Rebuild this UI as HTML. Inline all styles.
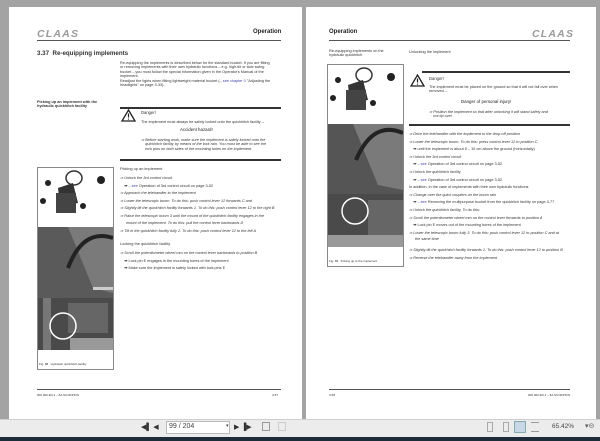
<!DOCTYPE html><html><head><style>
*{margin:0;padding:0;box-sizing:border-box}
body{width:600px;height:441px;background:#a3a3a3;position:relative;overflow:hidden;font-family:"Liberation Sans",sans-serif;color:#222}
.p{position:absolute;background:#fff}
.a{position:absolute;white-space:nowrap}
.t{position:absolute;font-size:3.8px;line-height:4.4px;color:#333;white-space:nowrap}
.i{font-style:italic}
.ln{position:absolute;height:1px;background:#555}
.lk{position:absolute;height:1.6px;background:#333}
.logo{position:absolute;font-style:italic;font-weight:bold;color:#9a9a9a;font-size:10.5px;letter-spacing:1.2px}
.b{color:#44a}
</style></head><body>
<div class="p" style="left:9px;top:7px;width:293px;height:412px"></div>
<div class="p" style="left:306px;top:7px;width:290px;height:412px"></div>

<!-- LEFT PAGE -->
<div class="logo" style="left:37px;top:28px">CLAAS</div>
<div class="a" style="left:253px;top:29px;font-size:6px;font-weight:bold">Operation</div>
<div class="ln" style="left:37px;top:40px;width:244px"></div>
<div class="a" style="left:37px;top:50px;font-size:6.2px;font-weight:bold;color:#333">3.37&nbsp;&nbsp;Re-equipping implements</div>
<div class="t" style="left:120px;top:61px">Re-equipping the implements is described below for the standard bucket. If you are fitting<br>or removing implements with their own hydraulic functions – e.g. high-tilt or side swing<br>bucket – you must follow the special information given in the Operator's Manual of the<br>implement.<br>Readjust the lights when fitting lightweight material bucket (<span class="b">– see chapter 0</span> "Adjusting the<br>headlights" on page 3-33).</div>
<div class="t" style="left:37px;top:100px;font-weight:bold;color:#333">Picking up an implement with the<br>hydraulic quickhitch facility</div>
<div class="lk" style="left:120px;top:107px;width:161px"></div>
<svg class="a" style="left:121px;top:109px" width="15" height="13"><path d="M7.5 1L14 12H1Z" fill="none" stroke="#222" stroke-width="1.3"/><path d="M7.5 4.5v4M7.5 9.6v1" stroke="#222" stroke-width="1.2"/></svg>
<div class="t" style="left:141px;top:111px;font-size:4.2px;color:#333">Danger!</div>
<div class="t" style="left:141px;top:120px">The implement must always be safely locked onto the quickhitch facility –</div>
<div class="t" style="left:180px;top:128px;font-size:4.4px;color:#222">Accident hazard!</div>
<div class="t i" style="left:141px;top:138px">⇒ Before starting work, make sure the implement is safely locked onto the<br>&nbsp;&nbsp;&nbsp;&nbsp;quickhitch facility by means of the lock rain. You must be able to see the<br>&nbsp;&nbsp;&nbsp;&nbsp;lock pins on both sides of the mounting holes on the implement.</div>
<div class="lk" style="left:120px;top:159px;width:161px"></div>

<div class="a" style="left:37px;top:167px;width:77px;height:203px;border:1px solid #888;background:#fff"></div>
<svg class="a" style="left:38px;top:168px" width="75" height="201">
<rect x="0" y="59" width="75" height="71" fill="#7a7a7a"/>
<path d="M0 59L30 59 55 120 75 125 75 130 0 130Z" fill="#5a5a5a"/>
<path d="M30 100Q45 60 75 70" stroke="#222" stroke-width="4" fill="none"/>
<rect x="0" y="130" width="75" height="52" fill="#4a4a4a"/>
<rect x="5" y="130" width="8" height="52" fill="#777"/>
<rect x="30" y="135" width="40" height="30" fill="#666"/>
<circle cx="25" cy="158" r="13" fill="none" stroke="#fff" stroke-width="1.5"/>
<rect x="32" y="170" width="43" height="12" fill="#999"/>
<path d="M20 20l15-5 5 20-18 3z" fill="#333"/><rect x="18" y="25" width="20" height="20" fill="#444"/>
<ellipse cx="36" cy="10" rx="8" ry="7" fill="none" stroke="#333" stroke-width="1.5"/>
<circle cx="63" cy="12" r="4" fill="#222"/><circle cx="10" cy="15" r="3" fill="#222"/><circle cx="5" cy="33" r="3" fill="#222"/><circle cx="45" cy="38" r="3" fill="#222"/>
<rect x="55" y="119" width="20" height="3" fill="#ccc"/>
</svg>
<div class="t" style="left:39px;top:362px;font-size:3px">Fig. 88 &nbsp; Hydraulic quickhitch facility</div>

<div class="t" style="left:120px;top:167px;font-size:3.9px;color:#333">Picking up an implement</div>
<div class="t i" style="left:120px;top:175px;line-height:7.6px">⇒ Unlock the 3rd control circuit<br>&nbsp;&nbsp;&nbsp;&nbsp;<span style="font-style:normal">➡ <span class="b">– see</span> Operation of 3rd control circuit on page 3-52</span><br>⇒ Approach the telehandler to the implement<br>⇒ Lower the telescopic boom. To do this: push control lever 12 forwards C and<br>⇒ Slightly tilt the quickhitch facility forwards 1. To do this: push control lever 12 to the right B<br>⇒ Raise the telescopic boom 3 until the mount of the quickhitch facility engages in the</div>
<div class="t i" style="left:126px;top:220.5px">mount of the implement. To do this: pull the control lever backwards D</div>
<div class="t i" style="left:120px;top:229px">⇒ Tilt in the quickhitch facility fully 2. To do this: push control lever 12 to the left A</div>
<div class="t" style="left:120px;top:242px;font-size:3.9px;color:#333">Locking the quickhitch facility</div>
<div class="t i" style="left:120px;top:250px;line-height:7.5px">⇒ Scroll the potentiometer wheel mm on the control lever backwards to position B<br><span style="font-style:normal">&nbsp;&nbsp;&nbsp;&nbsp;➡ Lock pin E engages in the mounting bores of the implement<br>&nbsp;&nbsp;&nbsp;&nbsp;➡ Make sure the implement is safely locked with lock pins E</span></div>

<div class="ln" style="left:37px;top:389px;width:244px"></div>
<div class="t" style="left:37px;top:393px;font-size:3px">000 000 EN 2 – 8A SCORPION</div>
<div class="t" style="left:272px;top:393px;font-size:3px">3-57</div>

<!-- RIGHT PAGE -->
<div class="a" style="left:329px;top:29px;font-size:6px;font-weight:bold">Operation</div>
<div class="logo" style="left:532px;top:28px">CLAAS</div>
<div class="ln" style="left:329px;top:40px;width:241px"></div>
<div class="t" style="left:329px;top:49px;color:#333">Re-equipping implements on the<br>hydraulic quickhitch</div>
<div class="t" style="left:409px;top:50px;color:#333">Unlocking the implement</div>
<div class="a" style="left:327px;top:64px;width:77px;height:203px;border:1px solid #888;background:#fff"></div>
<svg class="a" style="left:328px;top:65px" width="75" height="201">
<rect x="0" y="59" width="75" height="70" fill="#7a7a7a"/>
<path d="M0 59L25 59 50 120 75 125 75 129 0 129Z" fill="#555"/>
<path d="M28 95Q45 55 75 68" stroke="#222" stroke-width="4" fill="none"/>
<rect x="0" y="129" width="75" height="52" fill="#4a4a4a"/>
<rect x="40" y="135" width="35" height="35" fill="#666"/>
<circle cx="27" cy="146" r="13" fill="none" stroke="#fff" stroke-width="1.5"/>
<rect x="0" y="170" width="75" height="12" fill="#999"/>
<path d="M20 20l15-5 5 20-18 3z" fill="#333"/><rect x="18" y="25" width="20" height="20" fill="#444"/>
<ellipse cx="36" cy="10" rx="8" ry="7" fill="none" stroke="#333" stroke-width="1.5"/>
<circle cx="63" cy="12" r="4" fill="#222"/><circle cx="10" cy="15" r="3" fill="#222"/><circle cx="5" cy="33" r="3" fill="#222"/><circle cx="45" cy="38" r="3" fill="#222"/>
</svg>
<div class="t" style="left:329px;top:259px;font-size:3px">Fig. 89 &nbsp; Driving up to the implement</div>

<div class="lk" style="left:422px;top:71px;width:148px"></div>
<svg class="a" style="left:410px;top:74px" width="15" height="13"><path d="M7.5 1L14 12H1Z" fill="none" stroke="#222" stroke-width="1.3"/><path d="M7.5 4.5v4M7.5 9.6v1" stroke="#222" stroke-width="1.2"/></svg>
<div class="t" style="left:429px;top:77px;font-size:4.2px;color:#333">Danger!</div>
<div class="t" style="left:429px;top:85px">The implement must be placed on the ground so that it will not fall over when<br>removed –</div>
<div class="t" style="left:461px;top:100px;font-size:4.4px;color:#222">Danger of personal injury!</div>
<div class="t i" style="left:429px;top:110px">⇒ Position the implement so that after unlocking it will stand safely and<br>&nbsp;&nbsp;&nbsp;&nbsp;not tip over</div>
<div class="lk" style="left:409px;top:124px;width:161px"></div>

<div class="t i" style="left:409px;top:131px;line-height:7.6px">⇒ Drive the telehandler with the implement to the drop-off position<br>⇒ Lower the telescopic boom. To do this: press control lever 12 to position C,<br><span style="font-style:normal">&nbsp;&nbsp;&nbsp;&nbsp;➡ until the implement is about 5 – 10 cm above the ground (horizontally)</span><br>⇒ Unlock the 3rd control circuit<br><span style="font-style:normal">&nbsp;&nbsp;&nbsp;&nbsp;➡ <span class="b">– see</span> Operation of 3rd control circuit on page 3-52</span><br>⇒ Unlock the quickhitch facility<br><span style="font-style:normal">&nbsp;&nbsp;&nbsp;&nbsp;➡ <span class="b">– see</span> Operation of 3rd control circuit on page 3-52<br>In addition, in the case of implements with their own hydraulic functions</span><br>⇒ Change over the quick couplers on the boom rain<br><span style="font-style:normal">&nbsp;&nbsp;&nbsp;&nbsp;➡ <span class="b">– see</span> Removing the multipurpose bucket from the quickhitch facility on page 3-77</span><br>⇒ Unlock the quickhitch facility. To do this:<br>⇒ Scroll the potentiometer wheel mm on the control lever forwards to position A<br><span style="font-style:normal">&nbsp;&nbsp;&nbsp;&nbsp;➡ Lock pin E moves out of the mounting bores of the implement</span><br>⇒ Lower the telescopic boom fully 3. To do this: push control lever 12 to position C and at</div>
<div class="t i" style="left:415px;top:237px">the same time</div>
<div class="t i" style="left:409px;top:246px;line-height:8px">⇒ Slightly tilt the quickhitch facility forwards 1. To do this: push control lever 12 to position B<br>⇒ Reverse the telehandler away from the implement</div>

<div class="ln" style="left:329px;top:389px;width:241px"></div>
<div class="t" style="left:329px;top:393px;font-size:3px">3-58</div>
<div class="t" style="left:528px;top:393px;font-size:3px">000 000 EN 2 – 8A SCORPION</div>

<!-- TOOLBAR -->
<div class="a" style="left:0;top:419px;width:600px;height:18px;background:#ececec;border-top:1px solid #cfcfcf"></div>
<div class="a" style="left:0;top:437px;width:600px;height:4px;background:#1d2b3b"></div>
<div class="a" style="left:141px;top:423px;font-size:7px;color:#333">◀▌ ◀</div>
<div class="a" style="left:166px;top:421px;width:64px;height:13px;background:#fff;border:1px solid #bbb"></div>
<div class="a" style="left:169px;top:423px;font-size:7px;color:#444">99 / 204</div>
<div class="a" style="left:226px;top:423px;font-size:5px;color:#444">▾</div>
<div class="a" style="left:234px;top:423px;font-size:7px;color:#333">▶ ▐▶</div>
<div class="a" style="left:262px;top:422px;width:8px;height:9px;border:1px solid #999"></div>
<div class="a" style="left:278px;top:422px;width:8px;height:9px;border:1px solid #ccc"></div>
<div class="a" style="left:487px;top:422px;width:6px;height:10px;border:1px solid #aaa"></div>
<div class="a" style="left:503px;top:422px;width:6px;height:10px;border:1px solid #aaa"></div>
<div class="a" style="left:514px;top:421px;width:12px;height:12px;background:#c8d8ea;border:1px solid #8aa"></div>
<div class="a" style="left:531px;top:422px;width:8px;height:10px;border-top:1px solid #999;border-bottom:1px solid #999"></div>
<div class="a" style="left:552px;top:423px;font-size:6.5px;color:#444">65.42%</div>
<div class="a" style="left:585px;top:422px;font-size:7px;color:#555">▾⊝</div>
</body></html>
